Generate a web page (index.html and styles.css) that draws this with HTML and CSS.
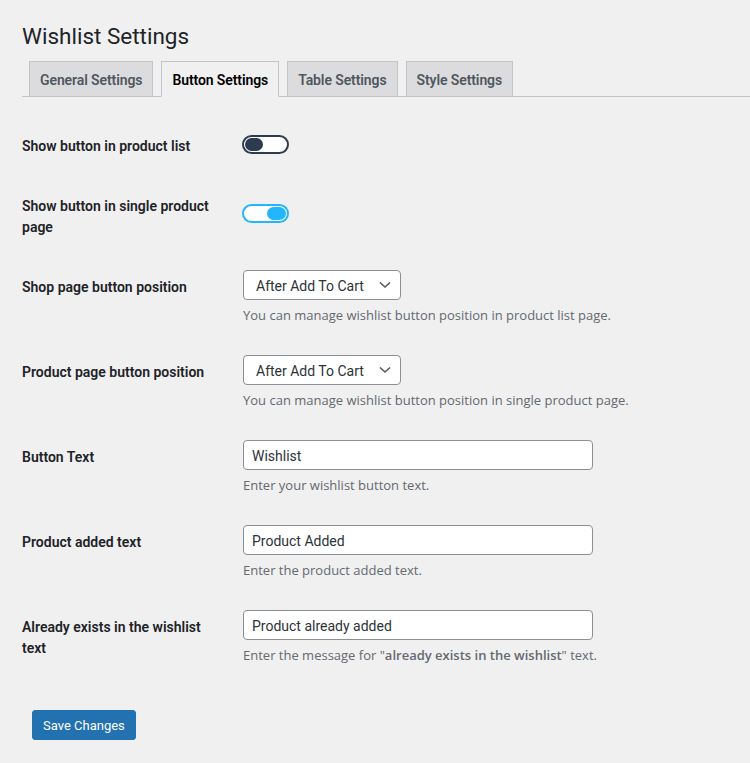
FILE: index.html
```html
<!DOCTYPE html>
<html lang="en">
<head>
<meta charset="utf-8">
<title>Wishlist Settings</title>
<link rel="stylesheet" href="styles.css">
</head>
<body>
<div class="wrap">
  <h1 class="title">Wishlist Settings</h1>
  <nav class="tabs">
    <a class="tab">General Settings</a>
    <a class="tab active">Button Settings</a>
    <a class="tab">Table Settings</a>
    <a class="tab">Style Settings</a>
  </nav>
  <div class="form">
    <div class="row row-toggle">
      <div class="label">Show button in product list</div>
      <div class="field"><span class="toggle"><span class="knob"></span></span></div>
    </div>
    <div class="row row-toggle2">
      <div class="label">Show button in single product page</div>
      <div class="field"><span class="toggle on"><span class="knob"></span></span></div>
    </div>
    <div class="row">
      <div class="label">Shop page button position</div>
      <div class="field">
        <div class="select"><span>After Add To Cart</span><svg class="chev" width="12" height="8" viewBox="0 0 12 8"><path d="M1 1.5 L6 6 L11 1.5" fill="none" stroke="#50575e" stroke-width="1.6"/></svg></div>
        <p class="desc">You can manage wishlist button position in product list page.</p>
      </div>
    </div>
    <div class="row">
      <div class="label">Product page button position</div>
      <div class="field">
        <div class="select"><span>After Add To Cart</span><svg class="chev" width="12" height="8" viewBox="0 0 12 8"><path d="M1 1.5 L6 6 L11 1.5" fill="none" stroke="#50575e" stroke-width="1.6"/></svg></div>
        <p class="desc">You can manage wishlist button position in single product page.</p>
      </div>
    </div>
    <div class="row">
      <div class="label">Button Text</div>
      <div class="field">
        <div class="input">Wishlist</div>
        <p class="desc">Enter your wishlist button text.</p>
      </div>
    </div>
    <div class="row">
      <div class="label">Product added text</div>
      <div class="field">
        <div class="input">Product Added</div>
        <p class="desc">Enter the product added text.</p>
      </div>
    </div>
    <div class="row">
      <div class="label">Already exists in the wishlist text</div>
      <div class="field">
        <div class="input">Product already added</div>
        <p class="desc">Enter the message for "<b>already exists in the wishlist</b>" text.</p>
      </div>
    </div>
  </div>
  <div class="submit"><button class="btn">Save Changes</button></div>
</div>
</body>
</html>
```

FILE: styles.css
```css
* { box-sizing: border-box; }
html, body { margin: 0; padding: 0; }
body {
  background: #f0f0f1;
  color: #1d2327;
  font-family: Roboto, "Liberation Sans", sans-serif;
  font-size: 14px;
  width: 750px;
  height: 763px;
  overflow: hidden;
}
.wrap { padding-left: 22px; }
.title {
  margin: 0;
  padding-top: 21px;
  font-size: 22.5px;
  font-weight: 400;
  line-height: 30px;
  color: #1d2327;
}
.tabs {
  display: flex;
  margin-top: 10px;
  border-bottom: 1px solid #c3c4c7;
}
.tab {
  display: block;
  margin-left: 7px;
  margin-bottom: -1px;
  padding: 6px 10px 4px;
  line-height: 24px;
  font-size: 14px;
  font-weight: 600;
  color: #50575e;
  background: #dcdcde;
  border: 1px solid #c3c4c7;
  white-space: nowrap;
  letter-spacing: -0.1px;
}
.tab + .tab { margin-left: 8px; }
.tab.active {
  background: #f0f0f1;
  color: #000;
  border-bottom-color: #f0f0f1;
}
.form { margin-top: 18px; }
.row {
  display: flex;
  height: 85px;
}
.row-toggle { height: 60px; }
.row-toggle2 { height: 81px; }
.label {
  width: 221px;
  padding: 21px 21px 0 0;
  font-weight: 600;
  line-height: 21px;
  font-size: 14px;
}
.field { padding-top: 14px; }
.row-toggle .field { padding-top: 20px; }
.row-toggle2 .field { padding-top: 29px; }
.toggle {
  display: block;
  width: 47px;
  height: 19px;
  border: 2px solid #2c3b4f;
  border-radius: 10px;
  background: #fff;
  padding: 1px;
  margin-left: -1px;
}
.knob {
  display: block;
  width: 18px;
  height: 13px;
  border-radius: 7px;
  background: #2c3b4f;
}
.toggle.on { border-color: #23b6fc; }
.toggle.on .knob { background: #23b6fc; margin-left: auto; width: 19px; }
.select {
  display: flex;
  align-items: center;
  justify-content: space-between;
  width: 158px;
  height: 30px;
  padding: 1px 9px 0 12px;
  background: #fff;
  border: 1px solid #8c8f94;
  border-radius: 4px;
  color: #2c3338;
  font-size: 14px;
}
.select .chev { margin-top: -1px; }
.input {
  width: 350px;
  height: 30px;
  line-height: 28px;
  padding: 1px 8px 0;
  background: #fff;
  border: 1px solid #8c8f94;
  border-radius: 4px;
  color: #2c3338;
  font-size: 14px;
}
.desc {
  margin: 5px 0 0;
  font-family: "Open Sans", "Noto Sans", sans-serif;
  font-size: 13px;
  line-height: 20px;
  color: #646970;
}
.desc b { font-weight: 600; }
.submit { margin: 29px 0 0 10px; }
.btn {
  height: 30px;
  padding: 2px 10px 0;
  background: #2271b1;
  border: 1px solid #2271b1;
  border-radius: 3px;
  color: #fff;
  font-family: inherit;
  font-size: 13px;
  line-height: 26px;
}
```
